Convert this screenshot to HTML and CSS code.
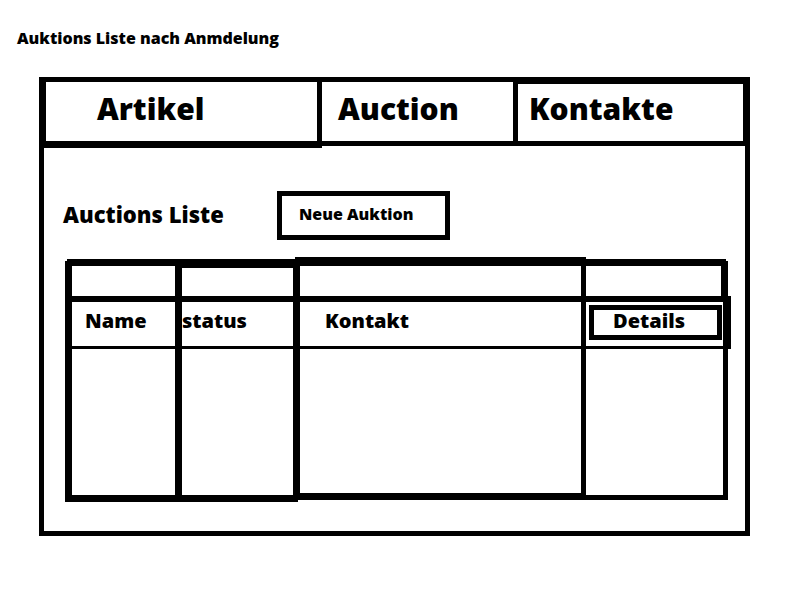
FILE: index.html
```html
<!DOCTYPE html>
<html lang="de">
<head>
  <meta charset="utf-8">
  <title>Auktions Liste</title>
  <link rel="stylesheet" href="styles.css">
</head>
<body>
  <h1 class="page-title">Auktions Liste nach Anmdelung</h1>
  <main class="frame">
    <nav class="tabs">
      <a class="tab tab-artikel" href="#artikel">Artikel</a>
      <a class="tab tab-auction" href="#auction">Auction</a>
      <a class="tab tab-kontakte" href="#kontakte">Kontakte</a>
    </nav>
    <section class="content">
      <header class="toolbar">
        <h2 class="list-title">Auctions Liste</h2>
        <button class="new-button" type="button">Neue Auktion</button>
      </header>
      <table class="auctions">
        <thead>
          <tr class="row head-row">
            <td class="c1"></td>
            <td class="c2"></td>
            <td class="c3"></td>
            <td class="c4"></td>
          </tr>
        </thead>
        <tbody>
          <tr class="row label-row">
            <th class="c1">Name</th>
            <th class="c2">status</th>
            <th class="c3">Kontakt</th>
            <td class="c4"><button class="details-button" type="button">Details</button></td>
          </tr>
          <tr class="row body-row">
            <td class="c1"></td>
            <td class="c2"></td>
            <td class="c3"></td>
            <td class="c4"></td>
          </tr>
        </tbody>
      </table>
    </section>
  </main>
</body>
</html>
```
FILE: styles.css
```css
* {
  box-sizing: border-box;
}

body {
  margin: 0;
  background: #fff;
  color: #000;
  font-family: "Open Sans", "Liberation Sans", sans-serif;
  font-weight: 800;
}

h1,
h2 {
  margin: 0;
  font-weight: 800;
}

button {
  background: #fff;
  color: #000;
  border: 5px solid #000;
  border-radius: 0;
  font-family: inherit;
  font-weight: 800;
  text-align: left;
  cursor: pointer;
}

.page-title {
  padding: 28px 17px 29px;
  font-size: 16px;
  line-height: 20px;
}

.frame {
  margin: 0 50px 64px 39px;
  border: 5px solid #000;
}

/* Tabs */
.tabs {
  display: grid;
  grid-template-columns: 278fr 196fr 227fr;
  align-items: start;
}

.tab {
  height: 64px;
  border: 0 solid #000;
  border-width: 0 5px 5px 0;
  color: #000;
  font-size: 30px;
  line-height: 54px;
  text-decoration: none;
}

.tab-artikel {
  height: 66px;
  border-width: 0 5px 7px 2px;
  padding-left: 51px;
}

.tab-auction {
  padding-left: 16px;
}

.tab-kontakte {
  border-width: 2px 2px 5px 0;
  padding-left: 11px;
  line-height: 50px;
}

/* Content */
.content {
  padding: 43px 14px 29px 21px;
}

.toolbar {
  display: grid;
  grid-template-columns: 212px 173px;
  align-items: center;
  margin-bottom: 17px;
}

.list-title {
  margin-left: -2px;
  padding-bottom: 4px;
  font-size: 22px;
  line-height: 28px;
}

.new-button {
  height: 49px;
  padding: 0 17px 3px;
  font-size: 16px;
}

/* Auction table */
.auctions,
.auctions thead,
.auctions tbody {
  display: block;
}

.row {
  display: grid;
  grid-template-columns: 117fr 118fr 286fr 145fr;
}

.row > * {
  display: block;
  padding: 0;
  border: 0 solid #000;
  font-size: 20px;
  font-weight: 800;
  line-height: 38px;
  text-align: left;
}

.row > .c1 {
  border-width: 0 7px;
}

.row > .c2 {
  border-right-width: 7px;
}

.row > .c3 {
  border-right-width: 5px;
}

.head-row {
  align-items: end;
}

.head-row > * {
  height: 37px;
}

.head-row > .c1 {
  border-top-width: 7px;
  clip-path: polygon(2px 0, 100% 0, 100% 100%, 0 100%, 0 2px, 2px 2px);
}

.head-row > .c2 {
  border-top-width: 9px;
}

.head-row > .c3 {
  height: 39px;
  margin-left: -5px;
  border-width: 9px 5px 0;
}

.head-row > .c4 {
  margin-right: 3px;
  border-width: 7px 7px 0 0;
  clip-path: polygon(0 0, calc(100% - 2px) 0, calc(100% - 2px) 2px, 100% 2px, 100% 100%, 0 100%);
}

.label-row {
  height: 53px;
  border: 0 solid #000;
  border-width: 6px 0 3px;
}

.label-row > .c1 {
  padding-left: 13px;
}

.label-row > .c3 {
  padding-left: 25px;
}

.label-row > .c4 {
  padding: 3px 1px 6px 3px;
  border-right-width: 8px;
}

.details-button {
  display: block;
  width: 100%;
  height: 35px;
  padding: 0 19px 3px;
  font-size: 20px;
  line-height: 22px;
}

.body-row {
  align-items: start;
}

.body-row > * {
  height: 151px;
}

.body-row > .c1 {
  height: 153px;
  border-bottom-width: 7px;
}

.body-row > .c2 {
  height: 153px;
  margin-right: 2px;
  border-width: 0 5px 7px 0;
}

.body-row > .c3 {
  margin-left: -2px;
  border-width: 0 5px 7px 2px;
}

.body-row > .c4 {
  margin-right: 3px;
  border-width: 0 5px 5px 0;
}
```
